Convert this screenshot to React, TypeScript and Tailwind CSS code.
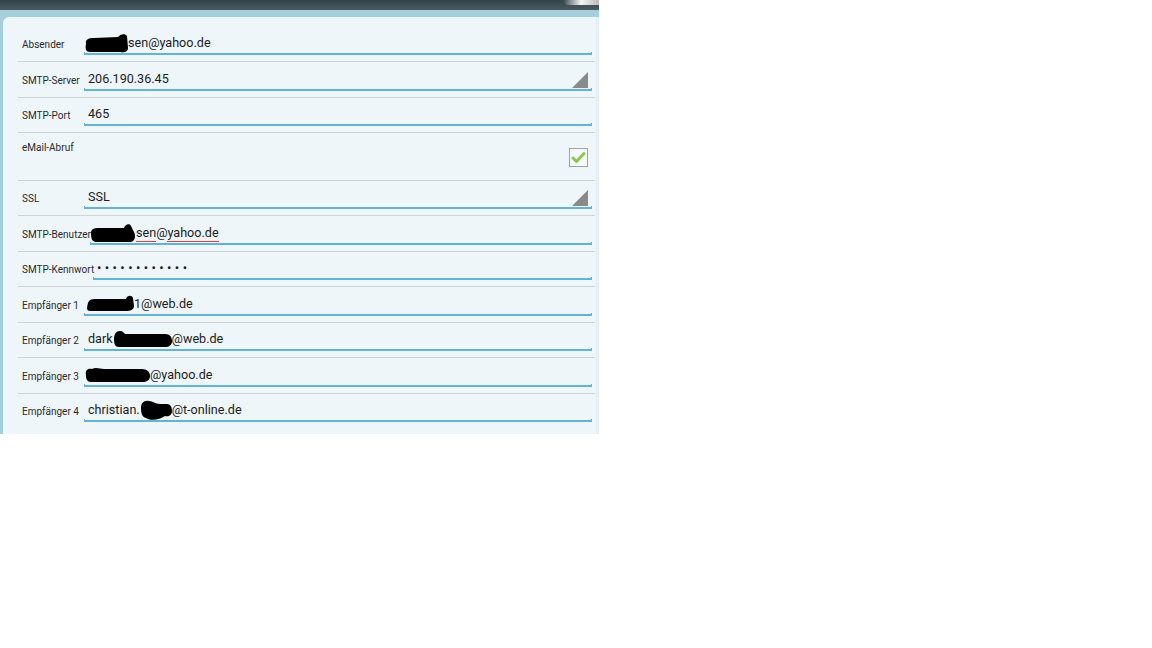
import React from "react";

const font = { fontFamily: "Roboto, 'Noto Sans', Arial, sans-serif" };

function Underline() {
  return <div className="h-[3px] border-x border-b-2 border-[#62b3d6]" />;
}

function Triangle() {
  return (
    <svg width="16" height="16" viewBox="0 0 16 16" className="flex-none mr-[4px] mb-[-2px]">
      <polygon points="16,0 16,16 0,16" fill="#8a8a8a" />
    </svg>
  );
}

function Blob({ w, h = 20, d }: { w: number; h?: number; d: string }) {
  return (
    <svg width={w} height={h} viewBox={`0 0 ${w} ${h}`} className="flex-none overflow-visible">
      <path d={d} fill="#000" />
    </svg>
  );
}

type RowProps = {
  label: string;
  labelW: string;
  rowCls: string;
  children: React.ReactNode;
  dropdown?: boolean;
  border?: boolean;
};

function Row({ label, labelW, rowCls, children, dropdown, border = true }: RowProps) {
  return (
    <div
      className={`flex items-end ml-[15px] mr-[1px] ${border ? "border-b border-[#cdd3d6]" : ""} ${rowCls}`}
    >
      <div className={`${labelW} flex-none pl-[4px] h-[18px] leading-[18px] mb-[1px] text-[10px] text-[#2a2a2a] whitespace-nowrap`}>
        {label}
      </div>
      <div className="flex-1 mr-[3px] flex flex-col">
        <div className="h-[18px] flex items-center text-[12.6px] text-[#1c1c1c] whitespace-nowrap">
          <div className="flex-1 flex items-center">{children}</div>
          {dropdown && <Triangle />}
        </div>
        <Underline />
      </div>
    </div>
  );
}

export default function App() {
  return (
    <div className="w-[1152px] h-[648px] bg-white" style={font}>
      <div className="w-[599px] h-[434px] bg-[#a7cfdb] flex flex-col">
        <div className="h-[10px] flex-none bg-gradient-to-b from-[#33434a] to-[#4b5b61] flex justify-end">
          <div className="w-[36px] h-[5px] rounded-bl-[5px] bg-gradient-to-r from-transparent via-[#f4f4f4] to-[#b9b9b9]" />
        </div>
        <div className="flex-1 flex pl-[3px] pt-[7px]">
          <div className="flex-1 bg-[#eef6fa] rounded-tl-[6px] flex flex-col">
            <Row label="Absender" labelW="w-[66px]" rowCls="h-[45px] pb-[6px]">
              <Blob
                w={44}
                d="M2 11 C1 6 5 5 10 5 L34 4 C36 1 41 0 43 3 L44 15 C44 19 40 20 36 19 L6 19 C2 19 1 16 2 11 Z"
              />
              <span>sen@yahoo.de</span>
            </Row>
            <Row label="SMTP-Server" labelW="w-[66px]" rowCls="h-[36px] pb-[6px]" dropdown>
              <span className="pl-[4px]">206.190.36.45</span>
            </Row>
            <Row label="SMTP-Port" labelW="w-[66px]" rowCls="h-[35px] pb-[6px]">
              <span className="pl-[4px]">465</span>
            </Row>
            <div className="flex justify-between ml-[15px] mr-[1px] h-[48px] border-b border-[#cdd3d6]">
              <div className="pl-[4px] mt-[6px] h-[18px] leading-[18px] text-[10px] text-[#2a2a2a]">eMail-Abruf</div>
              <div className="self-end mb-[13px] mr-[7px] w-[19px] h-[19px] border border-[#9ea4a7] bg-[#f6f9fa] flex items-center justify-center">
                <svg width="15" height="13" viewBox="0 0 15 13">
                  <path d="M2 7 L5.5 10.5 L13 2.5" fill="none" stroke="#86c94e" strokeWidth="3" strokeLinecap="round" strokeLinejoin="round" />
                </svg>
              </div>
            </div>
            <Row label="SSL" labelW="w-[66px]" rowCls="h-[35px] pb-[6px]" dropdown>
              <span className="pl-[4px]">SSL</span>
            </Row>
            <Row label="SMTP-Benutzer" labelW="w-[72px]" rowCls="h-[36px] pb-[6px]">
              <Blob
                w={46}
                d="M1 10 C1 6 4 5 9 5 L34 5 C35 1 40 0 41 3 L44 9 C46 13 45 18 41 19 L6 19 C2 19 1 15 1 10 Z"
              />
              <span className="h-[18px] leading-[17px] flex">
                <span className="border-b border-[#e0403f]">sen</span>
                <span>@</span>
                <span className="border-b border-[#e0403f]">yahoo.de</span>
              </span>
            </Row>
            <Row label="SMTP-Kennwort" labelW="w-[75px]" rowCls="h-[35px] pb-[6px]">
              <span className="pl-[4px] tracking-[3.4px] text-[13px]">••••••••••••</span>
            </Row>
            <Row label="Empfänger 1" labelW="w-[66px]" rowCls="h-[36px] pb-[6px]">
              <Blob
                w={50}
                d="M4 9 C5 5 9 5 14 5 L42 5 C43 1 48 1 49 4 L50 12 C50 16 46 17 42 17 L6 17 C2 17 3 13 4 9 Z"
              />
              <span>1@web.de</span>
            </Row>
            <Row label="Empfänger 2" labelW="w-[66px]" rowCls="h-[35px] pb-[6px]">
              <span className="pl-[4px]">dark</span>
              <Blob
                w={59}
                d="M1 10 C1 5 3 2 7 2 C10 2 11 4 12 5 L52 5 C57 5 59 8 59 12 C59 16 56 18 52 18 L6 18 C2 18 1 15 1 10 Z"
              />
              <span>@web.de</span>
            </Row>
            <Row label="Empfänger 3" labelW="w-[66px]" rowCls="h-[36px] pb-[6px]">
              <Blob
                w={66}
                d="M2 10 C1 5 4 3 8 4 C12 2 16 4 20 4 L58 4 C63 4 66 7 66 11 C66 15 63 17 58 17 L7 17 C3 17 2 14 2 10 Z"
              />
              <span>@yahoo.de</span>
            </Row>
            <Row label="Empfänger 4" labelW="w-[66px]" rowCls="h-[39px] pb-[11px]" border={false}>
              <span className="pl-[4px]">christian.</span>
              <Blob
                w={32}
                h={20}
                d="M1 8 C1 3 4 0 9 1 C13 1 15 4 20 4 L27 4 C31 4 32 8 32 11 C32 15 29 17 25 16 C20 20 10 21 6 18 C2 17 1 13 1 8 Z"
              />
              <span>@t-online.de</span>
            </Row>
          </div>
          <div className="w-[3px] bg-[#e6f0f4]" />
        </div>
      </div>
    </div>
  );
}
